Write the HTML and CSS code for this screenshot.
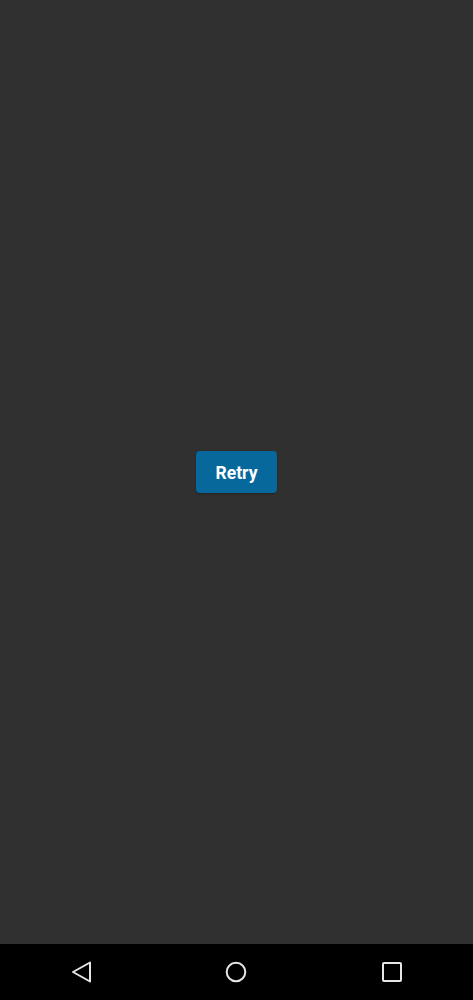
FILE: index.html
```html
<!DOCTYPE html>
<html>
<head>
<meta charset="utf-8">
<link rel="stylesheet" href="styles.css">
</head>
<body>
<main class="content">
  <button class="retry">Retry</button>
</main>
<nav class="navbar">
  <svg class="nav-icon" width="24" height="24" viewBox="0 0 24 24"><path d="M20 2.5 L3 12 L20 21.5 Z" fill="none" stroke="#e6e6e6" stroke-width="2" stroke-linejoin="round"/></svg>
  <svg class="nav-icon" width="24" height="24" viewBox="0 0 24 24"><circle cx="12" cy="12" r="9.3" fill="none" stroke="#e6e6e6" stroke-width="2"/></svg>
  <svg class="nav-icon" width="24" height="24" viewBox="0 0 24 24"><rect x="3" y="3" width="18" height="18" rx="1" fill="none" stroke="#e6e6e6" stroke-width="2"/></svg>
</nav>
</body>
</html>
```
FILE: styles.css
```css
html, body {
  margin: 0;
  padding: 0;
  width: 473px;
  height: 1000px;
  overflow: hidden;
  background: #303030;
  font-family: Roboto, "Liberation Sans", sans-serif;
}
body {
  display: flex;
  flex-direction: column;
}
.content {
  height: 944px;
  display: flex;
  align-items: center;
  justify-content: center;
}
.retry {
  width: 81px;
  height: 42px;
  background: #07689b;
  color: #ffffff;
  border: none;
  border-radius: 4px;
  font-family: Roboto, "Liberation Sans", sans-serif;
  font-weight: 700;
  font-size: 17.5px;
  padding: 2px 0 0 0;
  box-shadow: 0 1px 2px rgba(0,0,0,0.3);
}
.navbar {
  height: 56px;
  background: #000000;
  display: grid;
  grid-template-columns: 1fr 1fr 1fr;
  align-items: center;
  justify-items: center;
}
.navbar .nav-icon:first-child {
  margin-left: 6px;
}
.navbar .nav-icon:last-child {
  margin-right: 4px;
}
```
